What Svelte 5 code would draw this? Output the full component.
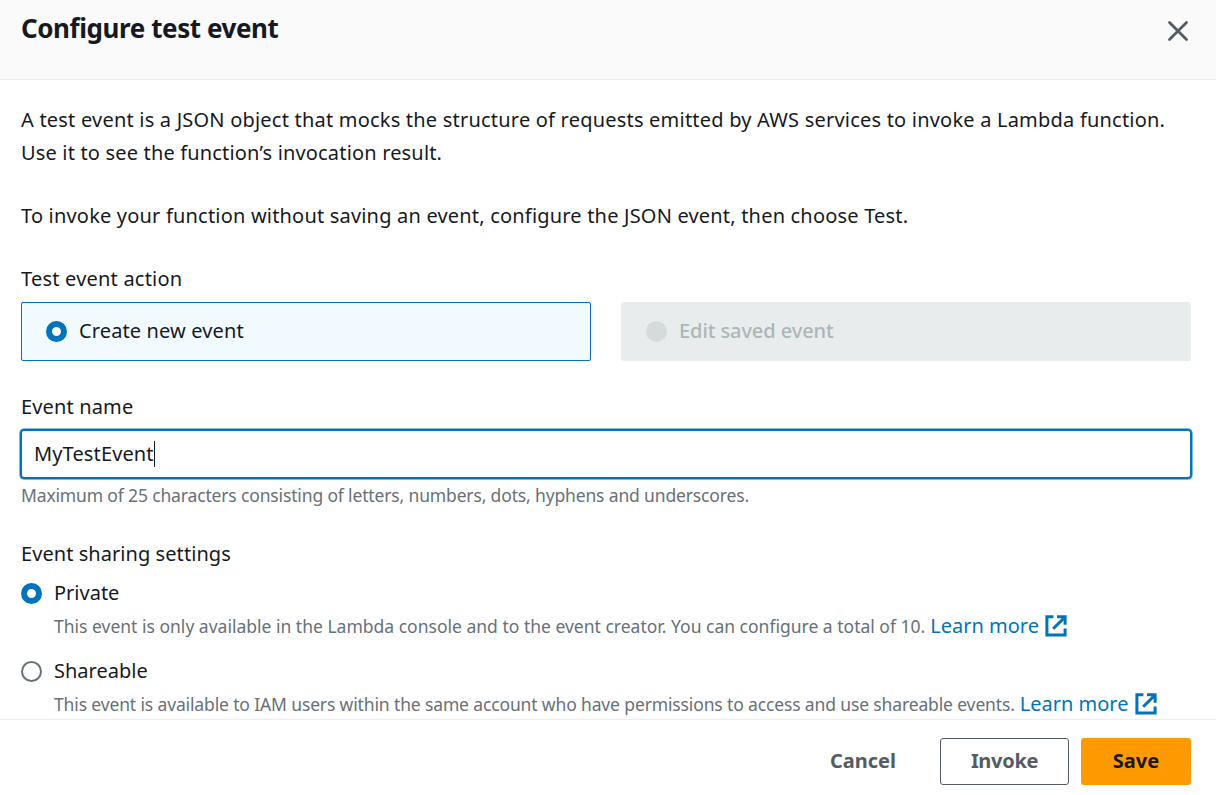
<script>
  let action = $state('create');
  let sharing = $state('private');
  let name = $state('MyTestEvent');
</script>

{#snippet external()}
  <svg class="ext" viewBox="0 0 22 22" width="22" height="22" aria-hidden="true">
    <path d="M8.4 1.7H1.9V20.1H20.1V13.4" />
    <path d="M12 1.7H20.1V9.8M20 2L8.2 13.8" />
  </svg>
{/snippet}

<div class="modal">
  <header>
    <h2>Configure test event</h2>
    <button class="close" aria-label="Close">
      <svg viewBox="0 0 22 22" width="22" height="22"><path d="M2.5 2.5l17 17M19.5 2.5l-17 17" /></svg>
    </button>
  </header>

  <main>
    <p class="intro"><span class="l1">A test event is a JSON object that mocks the structure of requests emitted by AWS services to invoke a Lambda function.</span><br /><span class="l2">Use it to see the function’s invocation result.</span></p>
    <p class="second">To invoke your function without saving an event, configure the JSON event, then choose Test.</p>

    <div class="label la">Test event action</div>
    <div class="tiles">
      <button class="tile selected" onclick={() => (action = 'create')}>
        <span class="radio" class:on={action === 'create'}></span><span class="t1">Create new event</span>
      </button>
      <button class="tile disabled" disabled>
        <span class="radio off"></span><span class="t2">Edit saved event</span>
      </button>
    </div>

    <div class="label lb">Event name</div>
    <div class="field"><span class="value">{name}</span><span class="caret"></span></div>
    <div class="hint">Maximum of 25 characters consisting of letters, numbers, dots, hyphens and underscores.</div>

    <div class="label lc">Event sharing settings</div>
    <div class="option">
      <button class="radio" class:on={sharing === 'private'} aria-label="Private" onclick={() => (sharing = 'private')}></button>
      <div>
        <div class="title">Private</div>
        <div class="desc"><span class="d1">This event is only available in the Lambda console and to the event creator. You can configure a total of 10.</span><a href="#top">Learn more</a>{@render external()}</div>
      </div>
    </div>
    <div class="option">
      <button class="radio" class:on={sharing === 'shareable'} aria-label="Shareable" onclick={() => (sharing = 'shareable')}></button>
      <div>
        <div class="title">Shareable</div>
        <div class="desc"><span class="d2">This event is available to IAM users within the same account who have permissions to access and use shareable events.</span><a href="#top">Learn more</a>{@render external()}</div>
      </div>
    </div>
  </main>

  <footer>
    <button class="btn cancel">Cancel</button>
    <button class="btn invoke">Invoke</button>
    <button class="btn save">Save</button>
  </footer>
</div>

<style>
  :global(body) { margin: 0; background: #fff; overflow: hidden; }
  .modal {
    width: 1216px; height: 795px; display: flex; flex-direction: column; overflow: hidden;
    font-family: "Noto Sans", "Open Sans", sans-serif; font-size: 20px; line-height: 33px; color: #16191f;
    white-space: nowrap; background: #fff;
  }
  .modal * { box-sizing: border-box; }
  button { font: inherit; color: inherit; margin: 0; padding: 0; background: none; border: 0; }
  header {
    flex: none; height: 80px; padding: 12px 27px 0 21px; background: #fafafa; border-bottom: 1px solid #eaeded;
    display: flex; justify-content: space-between; align-items: flex-start;
  }
  h2 { margin: 0; font-size: 26px; line-height: 33px; font-weight: 700; letter-spacing: -0.42px; }
  .close { height: 22px; margin-top: 8px; display: flex; }
  .close path { fill: none; stroke: #545b64; stroke-width: 2.8; stroke-linecap: round; }
  main { flex: none; height: 639px; padding: 23px 25px 0 21px; overflow: hidden; }
  p { margin: 0 0 30px; }
  .l1 { letter-spacing: 0.208px; }
  .l2 { letter-spacing: 0.17px; }
  .second { letter-spacing: 0.19px; }
  .label { height: 33px; }
  .la { letter-spacing: 0.21px; }
  .lb { letter-spacing: 0.15px; }
  .lc { letter-spacing: 0.06px; }
  .tiles { display: grid; grid-template-columns: 570px 570px; gap: 30px; margin: 7px 0 29px; }
  .tile { height: 59px; padding: 0 0 0 24px; border: 1px solid #0073bb; border-radius: 2px; background: #f1faff; display: flex; align-items: center; gap: 12px; }
  .tile.disabled { background: #e9ecec; border-color: #e9ecec; color: #aab7b8; border-radius: 3px; }
  .t1, .t2 { padding-bottom: 2px; letter-spacing: 0.13px; }
  .t2 { font-weight: 500; letter-spacing: -0.08px; }
  .radio { flex: none; width: 21px; height: 21px; border-radius: 50%; border: 2px solid #687078; background: #fff; }
  .radio.on { border: 6.5px solid #0073bb; border-width: 6.5px; }
  .radio.off { border: 0; background: #d5dbdb; }
  .field { width: 1172px; height: 50px; margin: 6px 0 0 -1px; padding-left: 12px; border: 2px solid #0073bb; border-radius: 4px; display: flex; align-items: center; box-shadow: 0 0 0 0.5px #0073bb; }
  .value { padding-bottom: 2px; letter-spacing: 0.13px; }
  .caret { width: 1px; height: 26px; background: #16191f; }
  .hint { height: 33px; font-size: 17.5px; color: #687078; margin-bottom: 25px; letter-spacing: -0.15px; }
  .option { display: flex; gap: 12px; height: 78px; }
  .option .radio { margin-top: 13px; }
  .title { height: 33px; margin-top: 6px; }
  .desc { display: flex; align-items: center; height: 33px; font-size: 17.5px; color: #687078; }
  .d1, .d2 { padding-top: 2px; }
  .d1 { letter-spacing: 0.004px; }
  .d2 { letter-spacing: -0.137px; }
  .desc a { font-size: 20px; color: #0073bb; text-decoration: none; margin-left: 5px; }
  .ext { margin: 1px 0 0 6px; fill: none; stroke: #0073bb; stroke-width: 3; }
  footer {
    flex: none; height: 76px; padding: 18px 25px 0; border-top: 1px solid #eaeded; background: #fff;
    display: flex; justify-content: flex-end; align-items: flex-start;
  }
  .btn { height: 47px; padding-bottom: 2px; border-radius: 3px; font-weight: 700; color: #545b64; }
  .cancel { width: 110px; margin-right: 22px; }
  .invoke { width: 129px; border: 1px solid #545b64; margin-right: 12px; letter-spacing: -0.3px; }
  .save { width: 110px; background: #ff9900; color: #16191f; }
</style>
